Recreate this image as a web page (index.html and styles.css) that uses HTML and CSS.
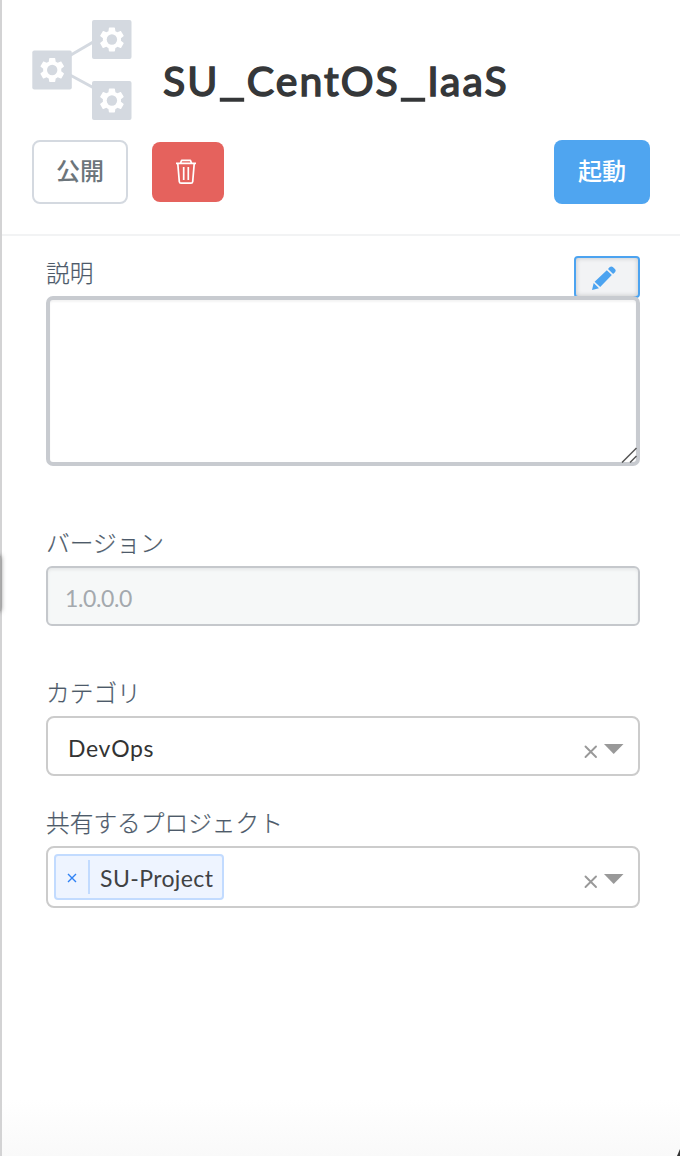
FILE: index.html
```html
<!DOCTYPE html>
<html lang="ja">
<head>
<meta charset="utf-8">
<title>SU_CentOS_IaaS</title>
<link rel="stylesheet" href="styles.css">
</head>
<body>
<main class="panel">
  <header class="header">
    <div class="title-row">
      <svg class="logo" width="100" height="100" viewBox="0 0 100 100">
        <defs>
          <g id="node">
            <rect width="39.5" height="39" rx="2" fill="#d4d9e0"/>
            <path transform="translate(4.8 4.4) scale(1.26)" fill="#fff" d="M19.14 12.94c.04-.3.06-.61.06-.94 0-.32-.02-.64-.07-.94l2.03-1.58c.18-.14.23-.41.12-.61l-1.92-3.32c-.12-.22-.37-.29-.59-.22l-2.39.96c-.5-.38-1.03-.7-1.62-.94l-.36-2.54c-.04-.24-.24-.41-.48-.41h-3.84c-.24 0-.43.17-.47.41l-.36 2.54c-.59.24-1.13.57-1.62.94l-2.39-.96c-.22-.08-.47 0-.59.22L2.74 8.87c-.12.21-.08.47.12.61l2.03 1.58c-.05.3-.09.63-.09.94s.02.64.07.94l-2.03 1.58c-.18.14-.23.41-.12.61l1.92 3.32c.12.22.37.29.59.22l2.39-.96c.5.38 1.03.7 1.62.94l.36 2.54c.05.24.24.41.48.41h3.84c.24 0 .44-.17.47-.41l.36-2.54c.59-.24 1.13-.56 1.62-.94l2.39.96c.22.08.47 0 .59-.22l1.92-3.32c.12-.22.07-.47-.12-.61z"/>
            <circle cx="19.9" cy="19.5" r="5.2" fill="#d4d9e0"/>
          </g>
        </defs>
        <path d="M38 35.5 62 21.5M38 55 62 68" stroke="#d4d9e0" stroke-width="3" fill="none"/>
        <use href="#node" x="0.3" y="30.5"/>
        <use href="#node" x="60" y="0"/>
        <use href="#node" x="60" y="61"/>
      </svg>
      <h1 class="title">SU<span class="wide">_</span>CentOS<span class="wide">_</span>IaaS</h1>
    </div>
    <div class="actions">
      <button class="btn btn-publish">公開</button>
      <button class="btn btn-delete" aria-label="削除">
        <svg width="22" height="26" viewBox="0 0 22 26" fill="none" stroke="#fff" stroke-width="1.7" stroke-linejoin="round">
          <path d="M1 4.4H21M5.5 4 6.6 1.4H15.4L16.5 4M2.8 4.8 4.3 22.6Q4.5 24.2 6 24.2H16Q17.5 24.2 17.7 22.6L19.2 4.8M8.7 8V21M13.3 8V21"/>
        </svg>
      </button>
      <button class="btn btn-launch">起動</button>
    </div>
  </header>
  <section class="form">
    <div class="label-row">
      <label class="label label-description">説明</label>
      <button class="edit" aria-label="編集">
        <svg width="26" height="26" viewBox="0 0 26 26" fill="#4ca3f0">
          <path d="M1 25 2.7 18 8 23.2ZM3.6 16.7 15.8 5.2 20.8 10 9.2 22.1ZM17 4 18.8 2.1Q20.3 .8 21.8 2L24.2 4.3Q25.4 5.9 24 7.3L22.1 9Z"/>
        </svg>
      </button>
    </div>
    <div class="textarea">
      <svg class="grip" width="16" height="16" viewBox="0 0 16 16" stroke="#555" stroke-width="1.5"><path d="M1 15.5 15.5 1M9 15.5 15.5 9"/></svg>
    </div>
    <label class="label label-version">バージョン</label>
    <div class="input">1.0.0.0</div>
    <label class="label label-category">カテゴリ</label>
    <div class="select">
      <span class="value">DevOps</span>
      <svg class="controls" width="42" height="16" viewBox="0 0 42 16"><path d="M3.5 3.5 14 14M14 3.5 3.5 14" stroke="#999" stroke-width="1.9" stroke-linecap="round"/><path d="M22 1H41.5L31.7 11Z" fill="#999"/></svg>
    </div>
    <label class="label label-project">共有するプロジェクト</label>
    <div class="select select-multi">
      <span class="tag"><span class="tag-remove"><svg width="10" height="10" viewBox="0 0 10 10"><path d="M1 1 9 9M9 1 1 9" stroke="#2f82f5" stroke-width="1.4"/></svg></span><span class="tag-text">SU-Project</span></span>
      <svg class="controls" width="42" height="16" viewBox="0 0 42 16"><path d="M3.5 3.5 14 14M14 3.5 3.5 14" stroke="#999" stroke-width="1.9" stroke-linecap="round"/><path d="M22 1H41.5L31.7 11Z" fill="#999"/></svg>
    </div>
  </section>
  <svg class="corner" width="3" height="7" viewBox="0 0 3 7"><path d="M3 0V7H0Z" fill="#333"/></svg>
</main>
<span class="drag-handle"></span>
</body>
</html>
```
FILE: styles.css
```css
* { box-sizing: border-box; }
body {
  position: relative;
  margin: 0;
  overflow: hidden;
  font-family: Lato, "Noto Sans CJK JP", sans-serif;
  background: #fff;
}
.panel {
  position: relative;
  height: 1156px;
  overflow: hidden;
  border-left: 2px solid #d3d3d4;
  background: linear-gradient(#fff 0, #fff 1100px, #f9f9f9 1156px);
}
.drag-handle {
  position: absolute;
  left: -6px;
  top: 556px;
  width: 7px;
  height: 55px;
  background: #aaa;
  box-shadow: 0 0 5px rgba(0, 0, 0, .5);
}
.header {
  height: 236px;
  padding: 20px 30px 0;
  border-bottom: 2px solid #f2f3f4;
}
.title-row { display: flex; height: 120px; }
.logo { display: block; }
.title {
  margin: 36px 0 0 31px;
  font-size: 41px;
  line-height: 50px;
  font-weight: 400;
  color: #353739;
  letter-spacing: 2px;
  -webkit-text-stroke: 1.5px #353739;
  white-space: nowrap;
}
.wide {
  display: inline-block;
  margin-right: 6.6px;
  transform: translateY(-1px) scaleX(1.38);
  transform-origin: left;
}
.actions { display: flex; align-items: center; height: 64px; }
.btn {
  display: flex;
  align-items: center;
  justify-content: center;
  padding: 0 0 4px;
  border: 0;
  border-radius: 8px;
  font: 500 24px/36px "Noto Sans CJK JP", sans-serif;
}
.btn-publish {
  width: 96px;
  height: 64px;
  border: 2px solid #d4d9e0;
  background: #fff;
  color: #6c757b;
}
.btn-delete {
  width: 72px;
  height: 60px;
  margin-left: 24px;
  padding: 0 4px 0 0;
  background: #e5625d;
}
.btn-launch {
  width: 96px;
  height: 64px;
  margin-left: auto;
  background: #4fa5f0;
  color: #fff;
}
.form {
  display: flex;
  flex-direction: column;
  padding: 20px 40px 0 44px;
}
.label {
  display: block;
  height: 36px;
  font: 300 23.7px/36px "Noto Sans CJK JP", sans-serif;
  color: #4d5a6a;
  -webkit-text-stroke: .2px #4d5a6a;
}
.label-row { display: flex; justify-content: space-between; height: 40px; }
.label-description { line-height: 32px; }
.edit {
  width: 66px;
  height: 42px;
  padding: 2px 7px 0 0;
  border: 2px solid #4ca3f0;
  border-radius: 4px;
  background: #f2f3f5;
  box-shadow: inset 0 0 5px rgba(0, 0, 0, .2);
  display: flex;
  align-items: center;
  justify-content: center;
}
.textarea {
  position: relative;
  height: 170px;
  border: 4px solid #c8cbd0;
  border-radius: 7px;
  background: #fff;
  box-shadow: inset 0 2px 2px #f4f4f4;
}
.grip { position: absolute; right: -1px; bottom: -1px; }
.label-version { margin-top: 58px; }
.input {
  height: 60px;
  margin-top: 6px;
  padding: 0 17px;
  border: 2px solid #c5c8cc;
  border-radius: 6px;
  background: #f6f8f8;
  box-shadow: inset 0 2px 3px #e6e8e9;
  font-size: 23px;
  line-height: 60px;
  letter-spacing: -.4px;
  color: #a4a9ae;
}
.label-category { margin-top: 48px; }
.select {
  display: flex;
  align-items: center;
  justify-content: space-between;
  height: 60px;
  margin-top: 6px;
  padding: 0 14px 0 20px;
  border: 2px solid #ccc;
  border-radius: 8px;
  background: #fff;
}
.value { font-size: 23px; color: #333; letter-spacing: .7px; padding-top: 4px; }
.controls { margin-top: 10px; }
.label-project { margin-top: 28px; }
.select-multi { height: 62px; margin-top: 6px; padding-left: 6px; }
.select-multi .controls { margin-top: 8px; }
.tag {
  display: flex;
  align-items: center;
  width: 170px;
  height: 46px;
  border: 2px solid #c2dbff;
  border-radius: 4px;
  background: #eef4ff;
}
.tag-remove {
  display: flex;
  align-items: center;
  justify-content: center;
  width: 34px;
  height: 34px;
  padding-top: 2px;
  border-right: 2px solid #c2dbff;
}
.tag-text { padding: 1px 0 0 10px; font-size: 23px; color: #404244; white-space: nowrap; letter-spacing: .4px; }
.corner { position: absolute; right: 0; bottom: 0; }
```
